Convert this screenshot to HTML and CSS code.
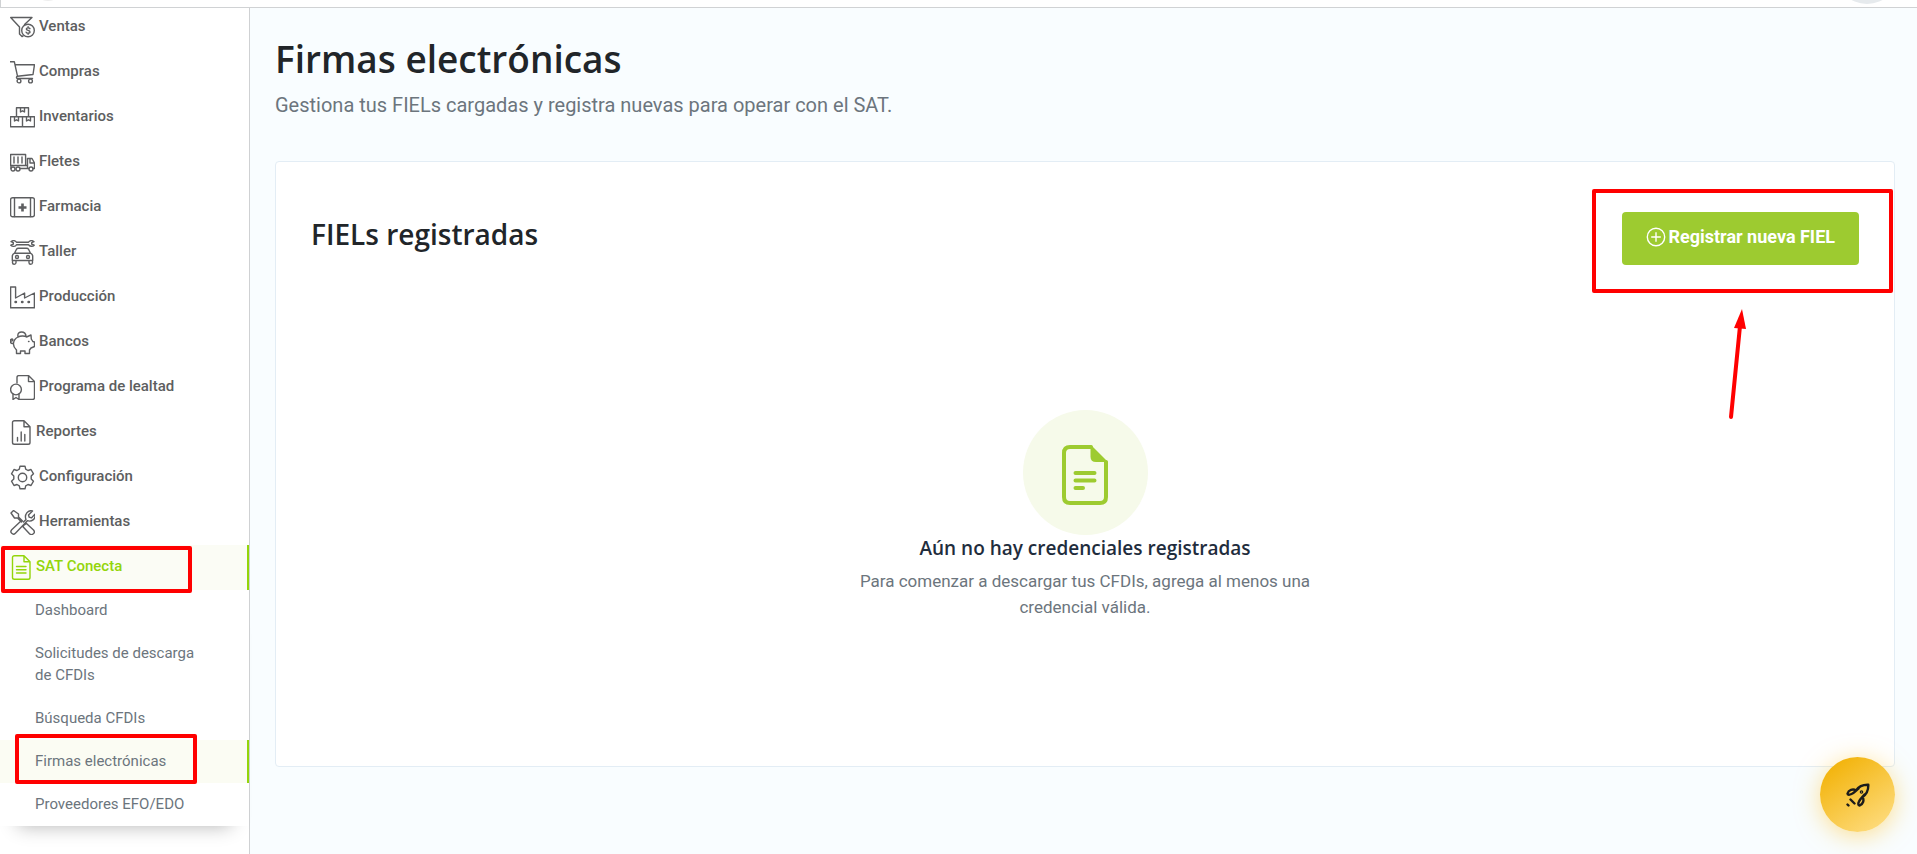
FILE: index.html
```html
<!DOCTYPE html>
<html lang="es">
<head>
<meta charset="utf-8">
<title>Firmas electrónicas</title>
<link rel="stylesheet" href="styles.css">
</head>
<body>
<header class="topbar"><span class="logo-dot"></span><span class="avatar"></span></header>
<div class="layout">
  <nav class="sidebar" aria-label="Principal">
    <ul class="menu">
      <li><a class="item" href="#"><svg class="icon" viewBox="0 0 25 25"><path d="M14.5 9.500 22 2.500H.7l8.800 9.500v7l2.500 2.500 1-.5"/><circle cx="18" cy="15.500" r="6.300"/><path d="M20 13.700c-.3-1-3.700-1.300-3.700.4s3.700 1 3.700 2.800-3.600 1.500-3.900.2M18.100 11.700v1.200M18.100 18v1.300"/></svg><span>Ventas</span></a></li>
      <li><a class="item" href="#"><svg class="icon" viewBox="0 0 25 25"><path d="M0 1.700h4.300l3.200 14.500M5 4.700h19.500L23 14.500 7.500 16.200c-1.200 0-1.500 2.300 0 2.300H22.500"/><circle cx="9" cy="21" r="1.900"/><circle cx="20.500" cy="21" r="1.900"/></svg><span>Compras</span></a></li>
      <li><a class="item" href="#"><svg class="icon" viewBox="0 0 25 25"><path d="M6.500 11.500V2.800h12v8.700M.5 11.800h24v10H.5zM12.500 11.800v10M10.500 3v4l2-1.200 2 1.200V3M4.500 12v4l2-1.200 2 1.200v-4M16.500 12v4l2-1.200 2 1.200v-4"/></svg><span>Inventarios</span></a></li>
      <li><a class="item" href="#"><svg class="icon" viewBox="0 0 25 25"><path d="M.6 4.500h15v11H.6zM4 7v6M8 7v6M12 7v6M1 15.500v3M10 18.500h8.700M17.500 18V8.500H22l2.500 4.500v5.500h-1.500M20 8.500V13h4.500M15.600 15.500h2"/><circle cx="3" cy="19" r="2"/><circle cx="8" cy="19" r="2"/><circle cx="21" cy="19" r="2"/></svg><span>Fletes</span></a></li>
      <li><a class="item" href="#"><svg class="icon" viewBox="0 0 25 25"><rect x=".6" y="2.800" width="23.800" height="19" rx="2"/><path d="M4.500 3v18.500M20.500 3v18.500"/><path class="cross" d="M12.500 8.500v8M8.500 12.500h8"/></svg><span>Farmacia</span></a></li>
      <li><a class="item" href="#"><svg class="icon" viewBox="0 0 25 25"><path d="M6.500 2.300h12c1-2 4-2.200 5.500-.6l-2.300 1v1.500l2.500 1c-1.500 1.700-4.700 1.400-5.700-.5h-12c-1 2-4 2.200-5.700.5l2.500-1V2.700L1 1.700c1.500-1.600 4.500-1.400 5.500.6zM4.500 13.200l2-4q.5-1 2-1h8q1.500 0 2 1l2 4M4.500 13.200h16q2.200 1 2.200 3v4.300H2.300v-4.300q0-2 2.200-3zM2.500 20.500v2.300q0 1.500 1.700 1.500T6 22.800v-2.300M19 20.500v2.300q0 1.500 1.700 1.500t1.800-1.500v-2.300"/><circle cx="7" cy="17" r="1.500"/><circle cx="18" cy="17" r="1.500"/></svg><span>Taller</span></a></li>
      <li><a class="item" href="#"><svg class="icon" viewBox="0 0 25 25"><path d="M.6 2h5v11l9-5v5l9.800-5v14.700H.6z"/><path class="bold" d="M5.500 17h.5M12 17h.5M18.500 17h.5"/></svg><span>Producción</span></a></li>
      <li><a class="item" href="#"><svg class="icon" viewBox="0 0 25 25"><path d="M8 7c3-1.500 7-1 8.500 0L21 5l.3 4 1.500 2.500 1.700.5v4.500L21 18l-1.500 2v3.500H15V21h-4.500v2.500H6.500V20c-4.500-4-4-10 1.500-13zM8 6.500c-1.500-6 8.500-6.300 8 .3M3.500 13.500c-4 .5-4-4-1.500-4.500 1.500 0 1 2.500-1.500 2"/><path d="M18.500 11.500h.5"/></svg><span>Bancos</span></a></li>
      <li><a class="item" href="#"><svg class="icon" viewBox="0 0 25 25"><path d="M7 8V2.500Q7 .6 9 .6h9.500l6 6V22.500q0 2-2 2H9.500M18.500.6v6h6"/><circle cx="6" cy="14.500" r="5.400"/><path d="M3 19v5.500l3-2 3 2V19"/></svg><span>Programa de lealtad</span></a></li>
      <li><a class="item" href="#"><svg class="icon icon-doc" viewBox="0 0 22 25"><path d="M4.500.7h9.500l6 6V22.500q0 1.800-1.800 1.800H4.300q-1.800 0-1.800-1.800V2.500Q2.500.7 4.500.7zM14 .7v6h6M7.500 17.500V21M11.200 12v9M14.800 14.500V21"/></svg><span>Reportes</span></a></li>
      <li><a class="item" href="#"><svg class="icon" viewBox="0 0 25 25"><path d="M10 1.200h5l.7 3 2.300 1.300 3-1 2.500 4.300-2.300 2.200v3l2.300 2.200-2.500 4.300-3-1-2.300 1.300-.7 3h-5l-.7-3L7 19.500l-3 1-2.500-4.300L3.800 14v-3L1.500 8.800 4 4.500l3 1 2.300-1.300z"/><circle cx="12.500" cy="12.500" r="4.200"/></svg><span>Configuración</span></a></li>
      <li><a class="item" href="#"><svg class="icon" viewBox="0 0 25 25"><path d="M1 3l2.500-2.500L8.500 4v3l4 4M1 3l3.500 5h3l4 4M13.500 12l2.500-2.500c-2-5 2-10 6.500-8.500l-4 4 .7 2.200 2.200.7 3.500-3.700c1 5-3.500 8-7.500 6.500l-12 12.500c-2.500 2.500-6-1-3.700-3.500l9-8.500M15 14.500l1.500-1 7 6.500c2.500 3-1.500 6-4 3.700l-6.500-7 1-1.500"/></svg><span>Herramientas</span></a></li>
      <li>
        <a class="item active" href="#"><svg class="icon icon-doc" viewBox="0 0 22 25"><path d="M4.500.7h9.500l6 6V22.500q0 1.800-1.800 1.800H4.300q-1.800 0-1.800-1.800V2.500Q2.500.7 4.500.7zM14 .7v6h6M6.500 11.500h9.500M6.500 14.800h9.500M6.500 18h9.500"/></svg><span>SAT Conecta</span></a>
        <ul class="submenu">
          <li><a class="subitem" href="#">Dashboard</a></li>
          <li><a class="subitem" href="#">Solicitudes de descarga de CFDIs</a></li>
          <li><a class="subitem" href="#">Búsqueda CFDIs</a></li>
          <li><a class="subitem current" href="#">Firmas electrónicas</a></li>
          <li><a class="subitem" href="#">Proveedores EFO/EDO</a></li>
        </ul>
      </li>
    </ul>
  </nav>
  <main class="content">
    <h1 class="title">Firmas electrónicas</h1>
    <p class="subtitle">Gestiona tus FIELs cargadas y registra nuevas para operar con el SAT.</p>
    <section class="card">
      <div class="card-head">
        <h2 class="card-title">FIELs registradas</h2>
        <button class="primary" type="button"><svg class="plus" viewBox="0 0 20 20"><circle cx="10" cy="10" r="8.700"/><path d="M10 5.200v9.600M5.200 10h9.600"/></svg>Registrar nueva FIEL</button>
      </div>
      <div class="empty">
        <div class="empty-icon"><svg class="empty-doc" viewBox="0 0 46 60"><path class="doc-line" d="M29 2H8Q2 2 2 8v44q0 6 6 6h30q6 0 6-6V17"/><path class="doc-fill" d="M29 0l17 17H34q-5.500 0-5.500-5.500V0z"/><path class="doc-line" d="M13.500 28h19M13.500 35.500h19M13.500 43h7.500"/></svg></div>
        <h3 class="empty-title">Aún no hay credenciales registradas</h3>
        <p class="empty-text">Para comenzar a descargar tus CFDIs, agrega al menos una credencial válida.</p>
      </div>
    </section>
  </main>
</div>
<button class="launcher" type="button" aria-label="Ayuda"><svg class="rocket" viewBox="0 0 24 24"><path d="M10 7.500C13 3 17 1.500 22.300 1.700 22.500 7 21 11 16.500 14M10 7.500C7 5.500 2.500 7 1.500 10.500c0 1.500 2 1.500 4 .5C8 10 10 7.500 12.500 5.500M16.500 14c2 3 .5 7.500-3 8.500-1.500 0-1.500-2-.5-4 1-2.500 3.500-4.500 5.500-7M4.500 16.500l4 4M1.500 21.500l1 1"/><circle cx="15.500" cy="9" r=".6"/></svg></button>
<div class="mark mark-section"></div>
<div class="mark mark-page"></div>
<div class="mark mark-button"></div>
<svg class="arrow" viewBox="0 0 16 112"><path class="arrow-line" d="M2 109 11 18"/><path class="arrow-head" d="M13 1 17 21 5 20z"/></svg>
</body>
</html>
```
FILE: styles.css
```css
* { box-sizing: border-box; }
body {
  margin: 0;
  min-height: 100vh;
  display: flex;
  flex-direction: column;
  background: #f9fdff;
  font-family: Roboto, "Liberation Sans", sans-serif;
  overflow: hidden;
}
h1, h2, h3, p, ul { margin: 0; padding: 0; }
ul { list-style: none; }
a { color: inherit; text-decoration: none; }

.topbar {
  height: 8px;
  padding: 0 18px 0 32px;
  display: flex;
  align-items: flex-end;
  justify-content: space-between;
  background: #fff;
  border-bottom: 1px solid #d0d2d4;
  border-left: 1px solid #d0d2d4;
  overflow: hidden;
}
.logo-dot { width: 30px; height: 30px; margin-bottom: 6px; border-radius: 50%; background: #eee; }
.avatar { width: 64px; height: 64px; margin-bottom: 3px; border-radius: 50%; background: #e6eaed; }

.layout { flex: 1; display: flex; }
.sidebar {
  width: 250px;
  flex: none;
  background: #fff;
  border-right: 1px solid #cfd1d3;
  color: #5d5e60;
  font-size: 15px;
  font-weight: 500;
}
.menu { margin-top: -3px; }
.item {
  height: 45px;
  padding: 0 10px;
  display: flex;
  align-items: center;
  gap: 4px;
}
.item span { padding-bottom: 3px; }
.icon {
  width: 25px;
  height: 25px;
  fill: none;
  stroke: currentColor;
  stroke-width: 1.4;
  stroke-linejoin: round;
  stroke-linecap: round;
}
.icon-doc { width: 22px; }
.bold { stroke-width: 2.4; }
.cross { stroke-width: 2.6; stroke-linecap: butt; }
.active { color: #93d50a; background: #fbfcf5; border-right: 2px solid #93d50a; }
.submenu {
  margin-top: -1px;
  color: #6c757d;
  font-weight: 400;
  box-shadow: 0 18px 18px -18px rgba(0, 0, 0, .3);
}
.subitem { display: block; padding: 10px 40px 11px 35px; line-height: 22px; }
.current { background: #fbfcf3; border-right: 2px solid #93d50a; }

.content { flex: 1; padding: 24px 22px 24px 25px; }
.title, .card-title, .empty-title {
  font-family: "Open Sans", "Noto Sans", sans-serif;
  font-weight: 600;
  color: #212529;
}
.title { font-size: 37px; line-height: 54px; }
.subtitle { margin-top: 4px; font-size: 20px; line-height: 30px; color: #6c757d; }
.card {
  margin-top: 41px;
  padding: 50px 35px 146px;
  background: #fff;
  border: 1px solid #e3edf5;
  border-radius: 4px;
}
.card-head { display: flex; justify-content: space-between; align-items: flex-start; }
.card-title { font-size: 28px; line-height: 44px; }
.primary {
  height: 53px;
  padding: 0 24px 4px;
  display: flex;
  align-items: center;
  gap: 2px;
  border: 0;
  border-radius: 4px;
  background: #9dcb30;
  color: #fff;
  font: 700 18px Roboto, "Liberation Sans", sans-serif;
}
.plus { width: 20px; height: 20px; fill: none; stroke: #fff; stroke-width: 1.4; }
.empty { margin-top: 145px; display: flex; flex-direction: column; align-items: center; text-align: center; }
.empty-icon {
  width: 125px;
  height: 125px;
  display: grid;
  place-items: center;
  border-radius: 50%;
  background: #f6faea;
}
.empty-doc { width: 46px; height: 60px; margin-top: 4px; }
.doc-line { fill: none; stroke: #9dcb30; stroke-width: 4; stroke-linecap: round; }
.doc-fill { fill: #9dcb30; }
.empty-title { font-size: 19px; line-height: 26px; color: #1f2d3d; }
.empty-text { max-width: 480px; margin-top: 7px; font-size: 17px; line-height: 26px; color: #6c757d; }

.launcher {
  position: fixed;
  right: 22px;
  bottom: 22px;
  width: 75px;
  height: 75px;
  padding: 0;
  display: grid;
  place-items: center;
  border: 0;
  border-radius: 50%;
  background: linear-gradient(145deg, #f3b50f 15%, #ffe08a 100%);
  box-shadow: 0 4px 24px rgba(255, 196, 40, .5);
}
.rocket { width: 24px; height: 24px; fill: none; stroke: #1b1b1b; stroke-width: 2.4; stroke-linecap: round; stroke-linejoin: round; }

.mark { position: absolute; border: 4px solid #f00; border-radius: 2px; pointer-events: none; }
.mark-section { left: 1px; top: 546px; width: 191px; height: 47px; }
.mark-page { left: 15px; top: 734px; width: 182px; height: 50px; }
.mark-button { right: 24px; top: 189px; width: 301px; height: 104px; }
.arrow { position: absolute; right: 172px; top: 308px; width: 16px; height: 112px; overflow: visible; pointer-events: none; }
.arrow-line { stroke: #f00; stroke-width: 4; stroke-linecap: round; }
.arrow-head { fill: #f00; }
```
